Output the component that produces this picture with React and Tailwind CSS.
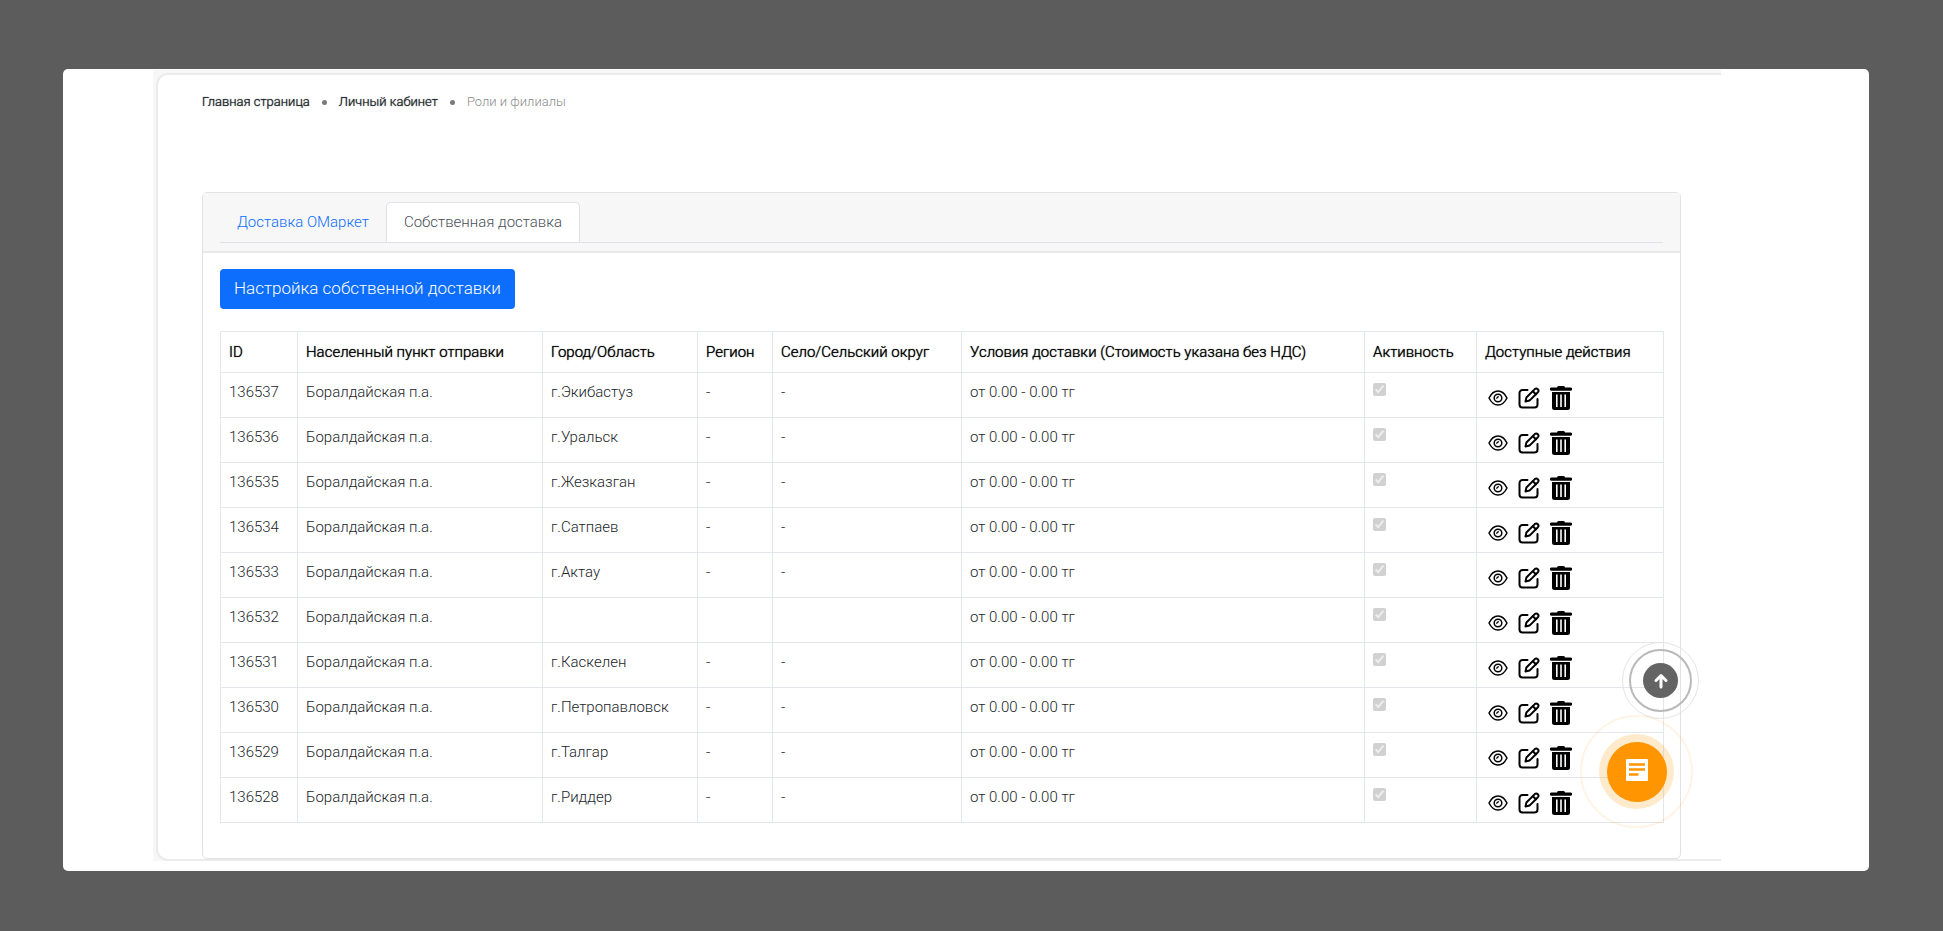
import { useState } from 'react'

const tabs = ['Доставка ОМаркет', 'Собственная доставка']

const rows = [
    { id: 136537, city: 'г.Экибастуз' },
    { id: 136536, city: 'г.Уральск' },
    { id: 136535, city: 'г.Жезказган' },
    { id: 136534, city: 'г.Сатпаев' },
    { id: 136533, city: 'г.Актау' },
    { id: 136532, city: '' },
    { id: 136531, city: 'г.Каскелен' },
    { id: 136530, city: 'г.Петропавловск' },
    { id: 136529, city: 'г.Талгар' },
    { id: 136528, city: 'г.Риддер' }
]

const columns = [
    { title: 'ID', width: 'w-[77px]' },
    { title: 'Населенный пункт отправки', width: 'w-[245px]' },
    { title: 'Город/Область', width: 'w-[155px]' },
    { title: 'Регион', width: 'w-[75px]' },
    { title: 'Село/Сельский округ', width: 'w-[189px]' },
    { title: 'Условия доставки (Стоимость указана без НДС)', width: '' },
    { title: 'Активность', width: 'w-[112px]' },
    { title: 'Доступные действия', width: 'w-[187px]' }
]

function EyeIcon() {
    return (
        <svg viewBox="0 0 20 20" className="size-5" fill="none" stroke="currentColor" strokeWidth="1.5">
            <path d="M1 10C3 6 6.200 3 10 3S17 6 19 10C17 14 13.800 17 10 17S3 14 1 10Z" strokeLinejoin="round" />
            <circle cx="10" cy="10" r="3.800" />
            <path d="M10.200 8a2 2 0 0 1-2.200 2.200" strokeWidth="1.200" />
        </svg>
    )
}

function EditIcon() {
    return (
        <svg viewBox="0 0 22 22" className="size-[22px]" fill="none" stroke="currentColor" strokeWidth="2" strokeLinecap="round" strokeLinejoin="round">
            <path d="M9.500 3H4.500a3 3 0 0 0-3 3V17.500a3 3 0 0 0 3 3h12a3 3 0 0 0 3-3v-5.500" />
            <path d="M7.500 14.500l.9-4 8.400-8.400a2.200 2.200 0 0 1 3.100 3.100l-8.400 8.400Z" />
            <path d="M14.800 4.200l3.100 3.100" />
        </svg>
    )
}

function TrashIcon() {
    return (
        <svg viewBox="0 0 22 24" className="h-6 w-[22px]" fill="currentColor">
            <path d="M7 1.500Q7 0 8.500 0h5Q15 0 15 1.500h5.500a1.300 1.300 0 0 1 0 3.300h-19a1.300 1.300 0 0 1 0-3.300Z" />
            <path fillRule="evenodd" d="M2 6h18v15.500a2.500 2.500 0 0 1-2.500 2.500h-13A2.500 2.500 0 0 1 2 21.500ZM6 8.500v12.500h1.600V8.500ZM10.200 8.500v12.500h1.600V8.500ZM14.400 8.500v12.500H16V8.500Z" />
        </svg>
    )
}

function Breadcrumbs() {
    return (
        <nav className="flex h-5 items-center gap-3 text-[13px] font-light text-[#212529]">
            <a href="#" className="[text-shadow:0_0_1px_currentColor]">Главная страница</a>
            <span className="size-[5px] rounded-full bg-[#7a7a7a]" />
            <a href="#" className="[text-shadow:0_0_1px_currentColor]">Личный кабинет</a>
            <span className="size-[5px] rounded-full bg-[#7a7a7a]" />
            <span className="text-[#8c8c8c]">Роли и филиалы</span>
        </nav>
    )
}

function DeliveryTable() {
    return (
        <table className="w-full table-fixed border-collapse text-[15px] leading-6 text-[#212529]">
            <thead>
                <tr className="h-[41px]">
                    {columns.map((col) => (
                        <th
                            key={col.title}
                            className={`border border-[#e3e6ea] px-2 text-left font-light whitespace-nowrap text-black [text-shadow:0_0_1px_currentColor] ${col.width}`}
                        >
                            {col.title}
                        </th>
                    ))}
                </tr>
            </thead>
            <tbody className="font-light">
                {rows.map((row) => (
                    <tr key={row.id} className="h-[45px] align-top *:border *:border-[#e3e6ea] *:px-2 *:pt-[7px]">
                        <td>{row.id}</td>
                        <td>Боралдайская п.а.</td>
                        <td>{row.city}</td>
                        <td>{row.city && '-'}</td>
                        <td>{row.city && '-'}</td>
                        <td>от 0.00 - 0.00 тг</td>
                        <td>
                            <input type="checkbox" className="mt-[3px] block size-[13px]" checked disabled readOnly aria-label="Активность" />
                        </td>
                        <td>
                            <div className="flex h-9 items-center gap-2.5 pl-[3px] text-black">
                                <button type="button" aria-label="Просмотр"><EyeIcon /></button>
                                <button type="button" aria-label="Редактировать"><EditIcon /></button>
                                <button type="button" aria-label="Удалить"><TrashIcon /></button>
                            </div>
                        </td>
                    </tr>
                ))}
            </tbody>
        </table>
    )
}

function FloatingButtons() {
    return (
        <>
            <div className="absolute right-[170px] bottom-[152px] flex size-[77px] items-center justify-center rounded-full border border-[#e4e4e4]">
                <div className="flex size-[63px] items-center justify-center rounded-full border-2 border-[#b9b9b9]">
                    <button type="button" aria-label="Наверх" className="flex size-[35px] items-center justify-center rounded-full bg-[#5c5c5c]/95">
                        <svg viewBox="0 0 16 16" className="size-4" fill="none" stroke="white" strokeWidth="3" strokeLinecap="round" strokeLinejoin="round">
                            <path d="M8 14V3M3 7.500l5-5 5 5" />
                        </svg>
                    </button>
                </div>
            </div>
            <div className="absolute right-[176px] bottom-[43px] flex size-[113px] items-center justify-center rounded-full border-2 border-[#ff9500]/10">
                <div className="flex size-[75px] items-center justify-center rounded-full bg-[#ff9500]/20">
                    <button type="button" aria-label="Сообщения" className="flex size-[60px] items-center justify-center rounded-full bg-[#ff9500] pb-1">
                        <svg viewBox="0 0 22 22" className="size-[22px]">
                            <rect width="22" height="22" rx="1" fill="white" />
                            <path d="M3 5.500h16M3 10.500h16M3 15.500h9.500" stroke="#ff9500" strokeWidth="2.600" />
                        </svg>
                    </button>
                </div>
            </div>
        </>
    )
}

function App() {
    const [active, setActive] = useState(1)

    return (
        <div className="min-h-screen bg-[#5c5c5c] pt-[69px] pr-[74px] pb-[59px] pl-[63px] font-[Roboto,sans-serif]">
            <main className="relative rounded-[5px] bg-white pt-px pr-[148px] pb-[10px] pl-[90px]">
                <div className="bg-[#f7f7f7] pt-[3px] pl-[3px]">
                    <div className="rounded-l-xl border-2 border-r-0 border-[#ebebeb] bg-white pt-[17px] pr-10 pl-11">
                        <Breadcrumbs />

                        <section className="mt-20 rounded-[5px] border border-[#e2e2e2]">
                            <div className="border-b-2 border-[#e8e8e8] bg-[#f7f7f7] px-[17px] pt-[9px] pb-2">
                                <div className="flex border-b border-[#dee2e6]">
                                    {tabs.map((tab, index) => (
                                        <button
                                            key={tab}
                                            type="button"
                                            onClick={() => setActive(index)}
                                            className={
                                                index === active
                                                    ? '-mb-px h-10 rounded-t-[5px] border border-b-0 border-[#dee2e6] bg-white px-[17px] text-[15px] font-light text-[#495057]'
                                                    : 'h-10 px-[17px] text-[15px] font-light text-[#0d6efd]'
                                            }
                                        >
                                            {tab}
                                        </button>
                                    ))}
                                </div>
                            </div>

                            <div className="pt-4 pr-4 pb-[35px] pl-[17px]">
                                <button type="button" className="mb-[22px] block h-10 rounded bg-[#0d6efd] px-[14px] text-[17px] font-light text-white">
                                    Настройка собственной доставки
                                </button>
                                <DeliveryTable />
                            </div>
                        </section>
                    </div>
                </div>
                <FloatingButtons />
            </main>
        </div>
    )
}

export default App
